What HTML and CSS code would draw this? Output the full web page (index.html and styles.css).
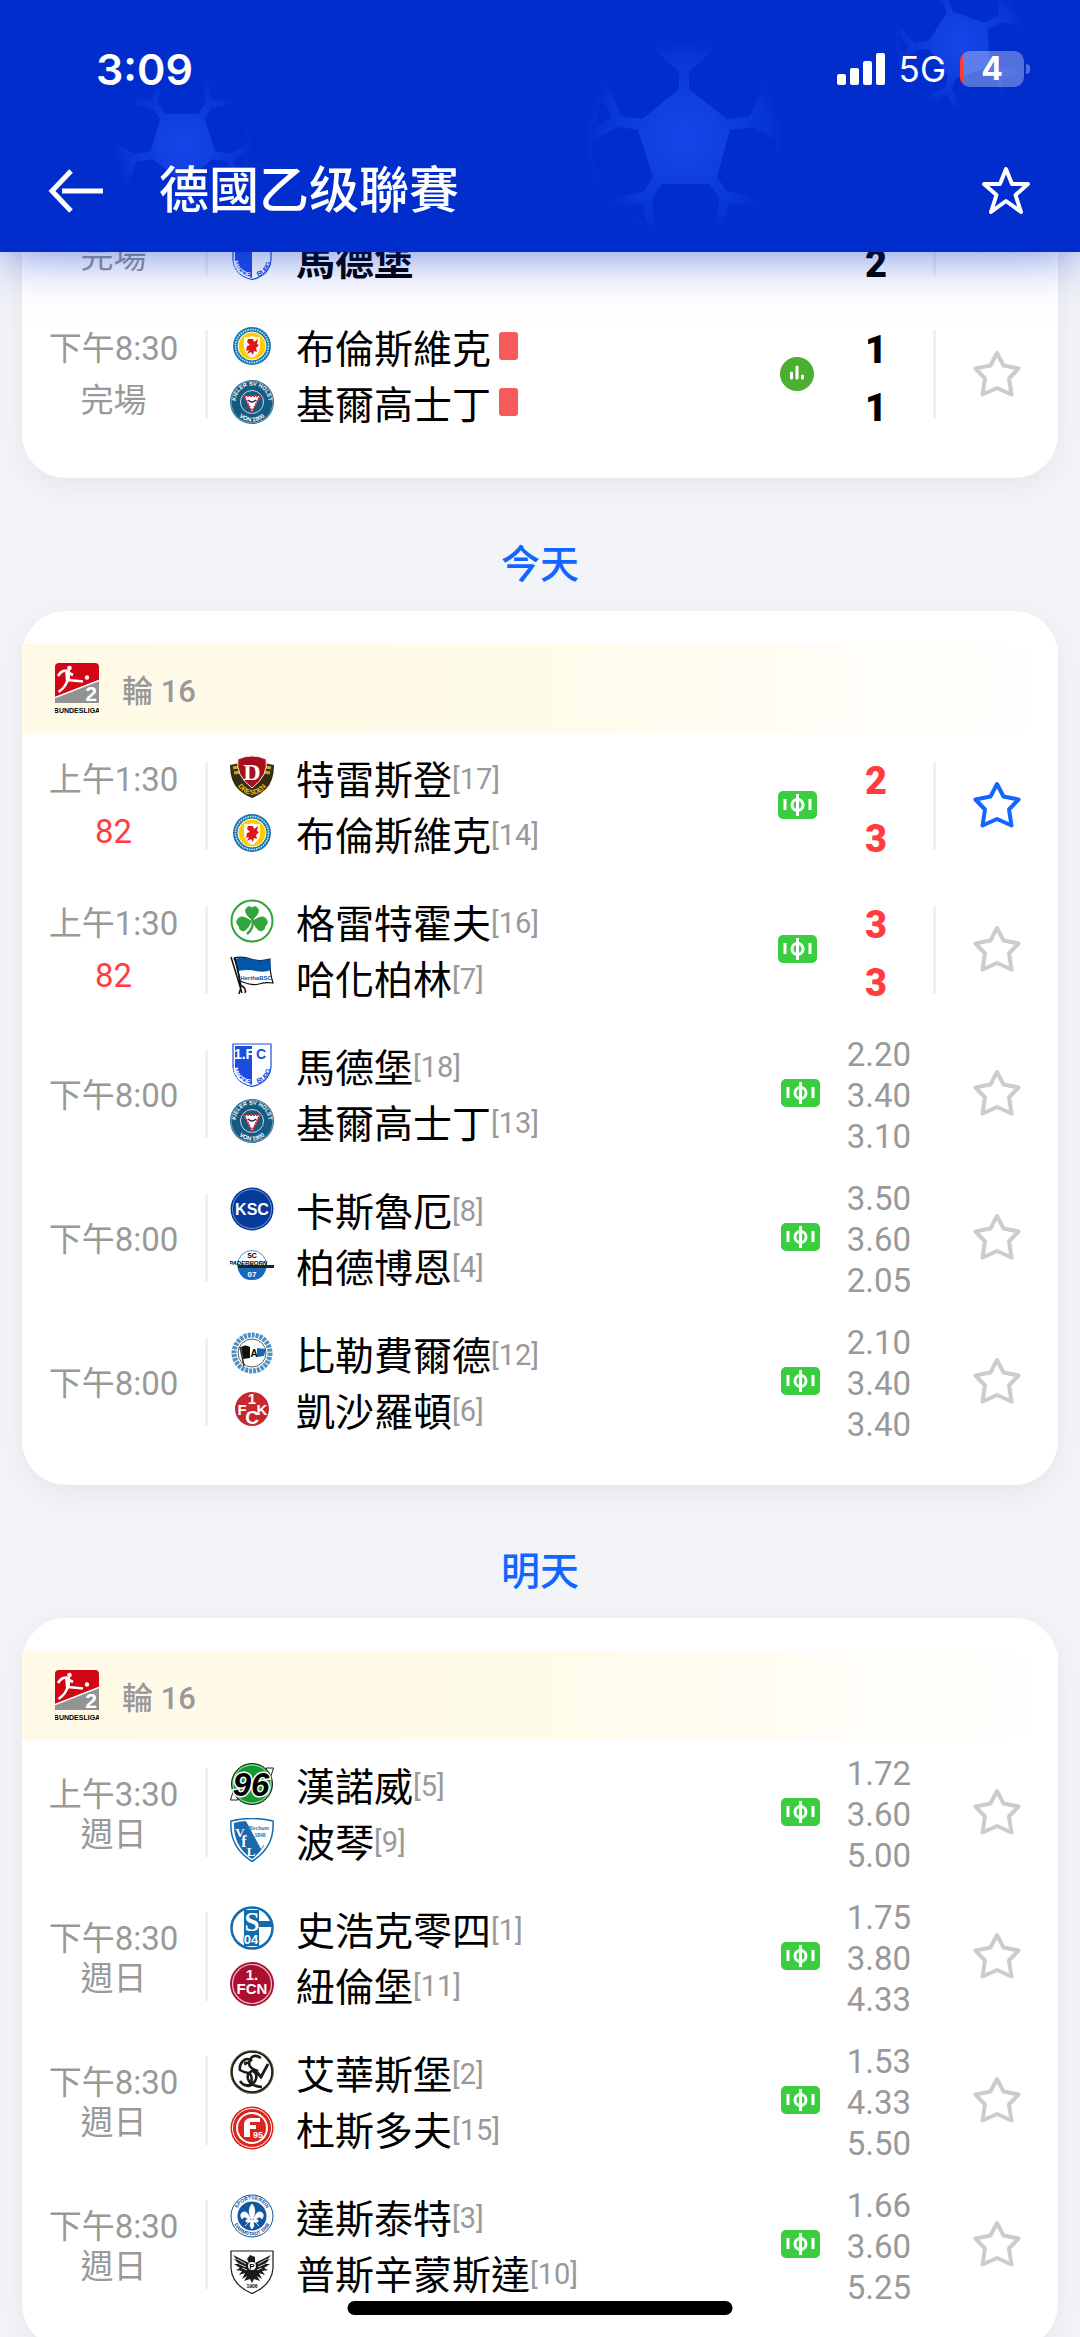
FILE: index.html
```html
<!DOCTYPE html>
<html lang="zh-Hant">

<head>
    <meta charset="UTF-8">
    <meta name="viewport" content="width=device-width, initial-scale=1.0">
    <title>德國乙级聯賽</title>
    <link rel="stylesheet" href="styles.css">
</head>

<body>
    <!-- Gradient needs a rendered svg, so it stays out of the hidden sprite -->
    <svg class="paints" aria-hidden="true">
        <defs>
            <radialGradient id="ballFill">
                <stop offset="0" stop-color="#1747e8" />
                <stop offset="0.45" stop-color="#0f3fdf" />
                <stop offset="0.85" stop-color="#0635d4" />
                <stop offset="1" stop-color="#002dcc" />
            </radialGradient>
        </defs>
    </svg>

    <!-- Shared icons and club badges -->
    <svg class="sprite" aria-hidden="true">
        <defs>
            <path id="ringTop" d="M5.5 22a16.5 16.5 0 0 1 33 0" />
            <path id="ringBottom" d="M2.5 22a19.5 19.5 0 0 0 39 0" />
            <path id="shieldCurve" d="M3 14V24Q4 40 22 41.5Q40 40 41 24V14" />
            <path id="dresdenCurve" d="M3 20Q8 39 22 39.500Q36 39 41 20" />
        </defs>
        <symbol id="ball" viewBox="-100 -102 200 204">
            <circle r="100" fill="url(#ballFill)" />
            <g fill="#002dcc">
                <path d="M-34-92-5-66V-49L-42-19-63-22-76-54Q-62-78-34-92z" />
                <path d="M34-92 5-66V-49L43-19 66-22 78-52Q62-78 34-92z" />
                <path d="M46-8 69-11 92 2Q93 33 76 61L43 53 33 39z" />
                <path d="M-46-8-65-11-91 2Q-92 33-73 61L-40 53-31 39z" />
                <path d="M-22 46H25L35 60 32 90Q0 98-29 90L-32 60z" />
                <path d="M-82-41-72-21-90-9zM-65 70-41 65-39 85zM44 65 66 70 41 85z" />
            </g>
        </symbol>
        <symbol id="star" viewBox="-24 -24 48 48">
            <path d="M0-21 6.500-8.500 21.500-5.500 12 4.500 14.500 20.500 0 14-14.500 20.500-12 4.500-21.500-5.500-6.500-8.500z" fill="none" stroke="currentColor" stroke-width="4" stroke-linejoin="round" />
        </symbol>
        <symbol id="pitch" viewBox="0 0 39 28">
            <rect width="39" height="28" rx="5" fill="#3bcd40" />
            <path d="M7 8v11M32 8v11M19.500 3v22" stroke="#fff" stroke-width="3" />
            <circle cx="19.5" cy="14" r="5.500" fill="none" stroke="#fff" stroke-width="3" />
        </symbol>
        <symbol id="stats" viewBox="0 0 34 34">
            <circle cx="17" cy="17" r="17" fill="#4caf32" />
            <path d="M11.500 16v5M17 10v11M22.500 19v2" stroke="#fff" stroke-width="3" stroke-linecap="round" />
        </symbol>
        <symbol id="league" viewBox="0 0 44 52">
            <rect width="44" height="40" rx="4" fill="#d20515" />
            <path d="M0 34 44 17V40H0z" fill="#929493" />
            <path d="M0 34.500 44 17.500" stroke="#fff" stroke-width="1.500" />
            <circle cx="14.500" cy="5" r="2.300" fill="#fff" />
            <circle cx="32" cy="14.500" r="2.200" fill="#fff" />
            <path d="M13 8Q7 6 3 13M13 8 13 17 28 18.500M13 16Q11 24 3.500 29M12 9 18 12" fill="none" stroke="#fff" stroke-width="2.600" stroke-linejoin="round" />
            <path d="M10 7H15V18L11 19z" fill="#fff" />
            <text x="36" y="38" class="logo-text" font-size="21" fill="#fff">2</text>
            <text x="22" y="50" class="logo-text" font-size="7">BUNDESLIGA</text>
        </symbol>

        <symbol id="braunschweig" viewBox="0 0 44 44">
            <circle cx="22" cy="22" r="19" fill="#1878ae" />
            <circle cx="22" cy="22" r="16.500" fill="none" stroke="#d4e8f2" stroke-width="1.500" stroke-dasharray="1.500 1" />
            <circle cx="22" cy="22" r="14" fill="#fc0" stroke="#fff" />
            <path d="M14 13Q18 14 22 12Q26 14 30 13V22Q30 30 22 34Q14 30 14 22z" fill="#fff" />
            <path d="M18 15h5l1 3 4-3-1 5 2 1-3 3 1 4-3-1-1 4-2-3-4 2 2-4-3 1 1-5 3-1-3-3z" fill="#e1141c" />
        </symbol>
        <symbol id="kiel" viewBox="0 0 44 44">
            <circle cx="22" cy="22" r="22" fill="#155a80" />
            <circle cx="22" cy="22" r="21" fill="none" stroke="#9dc0d2" stroke-width="0.700" />
            <text class="ring-text" font-size="5.500" fill="#fff"><textPath href="#ringTop" startOffset="50%">KIELER SV HOLST</textPath></text>
            <text class="ring-text" font-size="6" fill="#fff"><textPath href="#ringBottom" startOffset="50%">VON 1900</textPath></text>
            <circle cx="22" cy="22" r="11.500" fill="#155a80" stroke="#c9dde7" />
            <path d="M14 16H30L22 32z" fill="#fff" stroke="#d8273a" stroke-width="2" stroke-dasharray="2 1" />
            <path d="M18 20Q22 24 26 20" fill="none" stroke="#234" stroke-width="1.500" />
        </symbol>
        <symbol id="magdeburg" viewBox="0 0 44 44">
            <path d="M3 1H41V24Q39 40 22 43.500Q5 40 3 24z" fill="#fff" stroke="#1c4de0" stroke-width="1.200" />
            <path d="M5 3H22V42Q7 38 5 24z" fill="#1c4de0" />
            <text x="14" y="16" class="logo-text" font-size="14" fill="#fff">1.F</text>
            <text x="31" y="16" class="logo-text" font-size="14" fill="#1c4de0">C</text>
            <text class="ring-text" font-size="7" fill="#1c4de0"><textPath href="#shieldCurve" startOffset="71%">BURG</textPath></text>
            <text class="ring-text" font-size="7" fill="#fff"><textPath href="#shieldCurve" startOffset="31%">MAGDE</textPath></text>
        </symbol>
        <symbol id="dresden" viewBox="0 0 44 44">
            <path d="M0 10 10 8 34 8 44 10Q44 26 36 34Q30 40 22 43Q14 40 8 34Q0 26 0 10z" fill="#342d13" />
            <path d="M3 13 8 12M4 18 10 17M41 13 36 12M40 18 34 17" stroke="#c9a419" stroke-width="3" />
            <path d="M8 4Q22-2 36 4Q39 20 22 33Q5 20 8 4z" fill="#a6101c" stroke="#f5e6e6" />
            <text class="ring-text" font-size="7" fill="#e3bd18"><textPath href="#dresdenCurve" startOffset="50%">DRESDEN</textPath></text>
            <text x="22" y="25" class="logo-serif" font-size="24" fill="#fff">D</text>
        </symbol>
        <symbol id="greuther" viewBox="0 0 44 44">
            <circle cx="22" cy="22" r="20.500" fill="#fff" stroke="#2fa53b" stroke-width="2" />
            <path d="M22 21Q14 14 16 10Q18 6 22 9Q26 6 28 10Q30 14 22 21zM21 22Q18 31 13 32Q9 31 9 27Q5 24 8 20Q11 15 21 22zM23 22Q33 15 36 20Q39 24 35 27Q35 31 31 32Q26 31 23 22z" fill="#2fa53b" stroke="#2fa53b" />
            <path d="M22.500 20Q24 30 17 35" fill="none" stroke="#2fa53b" stroke-width="2.500" />
        </symbol>
        <symbol id="hertha" viewBox="0 0 44 44">
            <path d="M4 3Q12 1 21 4T40 4Q39 14 43 28Q36 27 29 29T10 26Q8 12 4 3z" fill="#fff" stroke="#111" stroke-width="1.200" />
            <path d="M5 4Q12 1 21 4T40 4L41 15Q34 18 26 16T8 16z" fill="#0056a8" />
            <text x="26" y="25" class="logo-text" font-size="6" fill="#0056a8">HerthaBSC</text>
            <path d="M1 2 12 38M5 3 11 31M10 30Q17 33 15 38M11 32 9 39" fill="none" stroke="#111" stroke-width="1.500" />
        </symbol>
        <symbol id="karlsruhe" viewBox="0 0 44 44">
            <circle cx="22" cy="22" r="21.500" fill="#063a9b" />
            <circle cx="22" cy="22" r="19.500" fill="none" stroke="#8da9dc" stroke-width="0.800" />
            <text x="22" y="28" class="logo-text" font-size="16" fill="#fff">KSC</text>
        </symbol>
        <symbol id="paderborn" viewBox="0 0 44 44">
            <circle cx="22" cy="22" r="14.500" fill="#fff" stroke="#4c94d3" />
            <path d="M8 25H36Q34 37 22 37Q10 37 8 25z" fill="#1868bd" />
            <path d="M8 22H44V25H8z" fill="#222" />
            <text x="22" y="15" class="logo-text" font-size="7">SC</text>
            <text x="18" y="22" class="logo-text" font-size="6" font-style="italic">PADERBORN</text>
            <text x="22" y="34" class="logo-text" font-size="8" fill="#fff">07</text>
        </symbol>
        <symbol id="bielefeld" viewBox="0 0 44 44">
            <circle cx="22" cy="22" r="18" fill="#fff" stroke="#4e8fc4" stroke-width="5" stroke-dasharray="3 1" />
            <circle cx="22" cy="22" r="14" fill="#fff" stroke="#333" stroke-width="0.800" />
            <path d="M11 16Q15 13 20 16V27L13 28z" fill="#111" />
            <path d="M27 17 36 18 34 25 27 26z" fill="#1868ae" />
            <path d="M10 16 14 35" stroke="#333" stroke-width="1.500" />
            <text x="24" y="26" class="logo-text" font-size="10">A</text>
        </symbol>
        <symbol id="kaiserslautern" viewBox="0 0 44 44">
            <circle cx="22" cy="22" r="17" fill="#c5282d" />
            <g fill="#fff">
                <text x="22" y="17" class="logo-text" font-size="15">1</text>
                <text x="12" y="28" class="logo-text" font-size="15">F</text>
                <text x="32" y="28" class="logo-text" font-size="15">K</text>
                <text x="22" y="37" class="logo-text" font-size="19">C</text>
            </g>
        </symbol>
        <symbol id="hannover" viewBox="0 0 44 44">
            <path d="M36 6H43.500L40 17zM8 38H0.500L4 27z" fill="#fff" stroke="#222" />
            <circle cx="22" cy="22" r="20.500" fill="#139a2f" stroke="#222" />
            <circle cx="22" cy="22" r="19" fill="none" stroke="#e6f4e8" stroke-width="0.800" />
            <text x="21" y="34" class="logo-text hannover-text" font-size="33" font-style="italic">96</text>
        </symbol>
        <symbol id="bochum" viewBox="0 0 44 44">
            <path d="M1 3Q22-2 43 3Q45 29 22 43.500Q-1 29 1 3z" fill="#fff" stroke="#1b69ac" stroke-width="1.500" />
            <path d="M4 5Q10 3 16 3L34 28Q29 36 22 41Q3 28 4 5z" fill="#1b69ac" />
            <path d="M16 3 31 31Q41 18 40 5Q30 2 16 3z" fill="#fff" />
            <text x="10" y="19" class="logo-serif" font-size="13" fill="#fff">V</text>
            <text x="14" y="29" class="logo-serif" font-size="16" fill="#fff">f</text>
            <text x="21" y="38" class="logo-serif" font-size="13" fill="#fff">L</text>
            <text x="29" y="12" class="logo-text" font-size="5" fill="#1b69ac">Bochum</text>
            <text x="30" y="19" class="logo-text" font-size="5" fill="#1b69ac">1848</text>
        </symbol>
        <symbol id="schalke" viewBox="0 0 44 44">
            <circle cx="22" cy="22" r="20.500" fill="#fff" stroke="#126bab" stroke-width="2.500" />
            <path d="M14 4H29V15H41V21H29V40H14z" fill="#126bab" />
            <text x="22" y="25" class="logo-serif" font-size="27" fill="#fff">S</text>
            <text x="21" y="38" class="logo-text schalke-year" font-size="13" fill="#fff">04</text>
        </symbol>
        <symbol id="nuernberg" viewBox="0 0 44 44">
            <circle cx="22" cy="22" r="22" fill="#ac0e30" />
            <circle cx="22" cy="22" r="19.500" fill="none" stroke="#e8c0ca" stroke-width="1.200" />
            <text x="22" y="18" class="logo-text" font-size="15" fill="#fff">1.</text>
            <text x="22" y="32" class="logo-text" font-size="15" fill="#fff">FCN</text>
        </symbol>
        <symbol id="elversberg" viewBox="0 0 44 44">
            <circle cx="22" cy="22" r="20.500" fill="#fff" stroke="#1c1a17" stroke-width="2.500" />
            <circle cx="22" cy="22" r="21.500" fill="none" stroke="#a9976a" stroke-width="0.700" />
            <path d="M22 11Q17 7 13 11T10 20Q13 22 18 23T21 34Q15 38 10 31M31 8Q23 3 20 10T25 20Q16 22 18 29T32 37M22 20Q29 24 25 31T15 35M16 15Q14 12 18 13" fill="none" stroke="#1c1a17" stroke-width="2.600" />
            <path d="M25 20 31 27 38 14" fill="none" stroke="#1c1a17" stroke-width="2.800" />
        </symbol>
        <symbol id="duesseldorf" viewBox="0 0 44 44">
            <circle cx="22" cy="22" r="21.500" fill="#dc241f" />
            <circle cx="22" cy="22" r="19.500" fill="none" stroke="#fff" />
            <circle cx="22" cy="22" r="15" fill="none" stroke="#fff" stroke-width="2" />
            <path d="M30 12H20Q13 13 14 21V31H20V23H26V19H20V16H30z" fill="#fff" />
            <text x="28" y="32" class="logo-text" font-size="9" fill="#fff">95</text>
        </symbol>
        <symbol id="darmstadt" viewBox="0 0 44 44">
            <circle cx="22" cy="22" r="21" fill="#fff" stroke="#1256a0" />
            <text class="ring-text" font-size="5" fill="#1256a0"><textPath href="#ringTop" startOffset="50%">SPORTVEREIN</textPath></text>
            <text class="ring-text" font-size="5" fill="#1256a0"><textPath href="#ringBottom" startOffset="50%">DARMSTADT 1898</textPath></text>
            <circle cx="22" cy="22" r="14.500" fill="#1256a0" />
            <path d="M22 10Q27 15 23 25H21Q17 15 22 10zM20 25Q18 17 13 18Q9 20 12 25Q15 20 19 27zM24 25Q26 17 31 18Q35 20 32 25Q29 20 25 27zM16 26H28V28H16zM21 28H23L24 32 22 35 20 32zM19 28 15 32M25 28 29 32" fill="#fff" stroke="#fff" stroke-width="0.800" />
        </symbol>
        <symbol id="muenster" viewBox="0 0 44 44">
            <path d="M1 1H43V18Q42 35 22 43.500Q2 35 1 18z" fill="#fff" stroke="#1a1a1a" stroke-width="1.200" />
            <path d="M20 5 17 9 19 13 3 5 7 10 4 9 9 14 4 14 10 18 6 20 12 21 9 25 15 23 12 29 17 26 14 31 20 29 22 33 24 29 30 31 27 26 32 29 29 23 35 25 32 21 38 20 34 18 40 14 35 14 40 9 37 10 41 5 25 13 25 7z" fill="#1a1a1a" />
            <path d="M16 14 7 9M16 17 9 14M17 20 12 18M28 14 37 9M28 17 35 14M27 20 32 18" stroke="#fff" stroke-width="0.800" />
            <circle cx="22" cy="16" r="4" fill="#fff" />
            <text x="22" y="19" class="logo-text" font-size="8">P</text>
            <text x="22" y="38" class="logo-text" font-size="5">1906</text>
        </symbol>
    </svg>

    <div class="app">
        <header class="header">
            <svg class="ball ball-left"><use href="#ball" /></svg>
            <svg class="ball ball-middle"><use href="#ball" /></svg>
            <svg class="ball ball-right"><use href="#ball" /></svg>

            <div class="status-bar">
                <span class="clock">3:09</span>
                <div class="status-icons">
                    <svg class="signal" viewBox="0 0 48 32" fill="#fff">
                        <rect y="21" width="9" height="11" rx="2" />
                        <rect x="13" y="15" width="9" height="17" rx="2" />
                        <rect x="26" y="8" width="9" height="24" rx="2" />
                        <rect x="39" width="9" height="32" rx="2" />
                    </svg>
                    <span class="network">5G</span>
                    <span class="battery">4</span>
                </div>
            </div>

            <div class="nav-bar">
                <button class="icon-button" aria-label="返回">
                    <svg class="arrow" viewBox="0 0 55 44" fill="none" stroke="#fff" stroke-width="5">
                        <path d="M23 2 4 22 23 42M14 22H55" />
                    </svg>
                </button>
                <h1 class="title">德國乙级聯賽</h1>
                <button class="icon-button" aria-label="收藏聯賽">
                    <svg class="nav-star" viewBox="-24 -24 48 48" fill="none" stroke="#fff" stroke-width="4" stroke-linejoin="round">
                        <path d="M0-22 6-7H22L9.500 4 15 21 0 10-15 21-9.500 4-22-7H-6z" />
                    </svg>
                </button>
            </div>
        </header>

        <main class="schedule">
            <section class="card">
                <div class="match">
                    <div class="time spaced"><span>下午8:00</span><span>完場</span></div>
                    <div class="teams">
                        <div class="team"></div>
                        <div class="team winner"><svg><use href="#magdeburg" /></svg><span>馬德堡</span></div>
                    </div>
                    <svg class="stats"><use href="#stats" /></svg>
                    <div class="score"><span>1</span><span>2</span></div>
                    <button class="favorite divided" aria-label="收藏"><svg><use href="#star" /></svg></button>
                </div>
                <div class="match">
                    <div class="time spaced"><span>下午8:30</span><span>完場</span></div>
                    <div class="teams">
                        <div class="team"><svg><use href="#braunschweig" /></svg><span>布倫斯維克</span><i class="red-card"></i></div>
                        <div class="team"><svg><use href="#kiel" /></svg><span>基爾高士丁</span><i class="red-card"></i></div>
                    </div>
                    <svg class="stats"><use href="#stats" /></svg>
                    <div class="score"><span>1</span><span>1</span></div>
                    <button class="favorite divided" aria-label="收藏"><svg><use href="#star" /></svg></button>
                </div>
            </section>

            <h2 class="day">今天</h2>
            <section class="card">
                <div class="round"><svg><use href="#league" /></svg><span>輪 16</span></div>
                <div class="match">
                    <div class="time spaced"><span>上午1:30</span><span class="live">82</span></div>
                    <div class="teams">
                        <div class="team"><svg><use href="#dresden" /></svg><span>特雷斯登</span><span class="rank">[17]</span></div>
                        <div class="team"><svg><use href="#braunschweig" /></svg><span>布倫斯維克</span><span class="rank">[14]</span></div>
                    </div>
                    <svg class="pitch"><use href="#pitch" /></svg>
                    <div class="score live"><span>2</span><span>3</span></div>
                    <button class="favorite divided active" aria-label="取消收藏"><svg><use href="#star" /></svg></button>
                </div>
                <div class="match">
                    <div class="time spaced"><span>上午1:30</span><span class="live">82</span></div>
                    <div class="teams">
                        <div class="team"><svg><use href="#greuther" /></svg><span>格雷特霍夫</span><span class="rank">[16]</span></div>
                        <div class="team"><svg><use href="#hertha" /></svg><span>哈化柏林</span><span class="rank">[7]</span></div>
                    </div>
                    <svg class="pitch"><use href="#pitch" /></svg>
                    <div class="score live"><span>3</span><span>3</span></div>
                    <button class="favorite divided" aria-label="收藏"><svg><use href="#star" /></svg></button>
                </div>
                <div class="match">
                    <div class="time"><span>下午8:00</span></div>
                    <div class="teams">
                        <div class="team"><svg><use href="#magdeburg" /></svg><span>馬德堡</span><span class="rank">[18]</span></div>
                        <div class="team"><svg><use href="#kiel" /></svg><span>基爾高士丁</span><span class="rank">[13]</span></div>
                    </div>
                    <svg class="pitch"><use href="#pitch" /></svg>
                    <div class="odds"><span>2.20</span><span>3.40</span><span>3.10</span></div>
                    <button class="favorite" aria-label="收藏"><svg><use href="#star" /></svg></button>
                </div>
                <div class="match">
                    <div class="time"><span>下午8:00</span></div>
                    <div class="teams">
                        <div class="team"><svg><use href="#karlsruhe" /></svg><span>卡斯魯厄</span><span class="rank">[8]</span></div>
                        <div class="team"><svg><use href="#paderborn" /></svg><span>柏德博恩</span><span class="rank">[4]</span></div>
                    </div>
                    <svg class="pitch"><use href="#pitch" /></svg>
                    <div class="odds"><span>3.50</span><span>3.60</span><span>2.05</span></div>
                    <button class="favorite" aria-label="收藏"><svg><use href="#star" /></svg></button>
                </div>
                <div class="match">
                    <div class="time"><span>下午8:00</span></div>
                    <div class="teams">
                        <div class="team"><svg><use href="#bielefeld" /></svg><span>比勒費爾德</span><span class="rank">[12]</span></div>
                        <div class="team"><svg><use href="#kaiserslautern" /></svg><span>凱沙羅頓</span><span class="rank">[6]</span></div>
                    </div>
                    <svg class="pitch"><use href="#pitch" /></svg>
                    <div class="odds"><span>2.10</span><span>3.40</span><span>3.40</span></div>
                    <button class="favorite" aria-label="收藏"><svg><use href="#star" /></svg></button>
                </div>
            </section>

            <h2 class="day">明天</h2>
            <section class="card">
                <div class="round"><svg><use href="#league" /></svg><span>輪 16</span></div>
                <div class="match">
                    <div class="time"><span>上午3:30</span><span>週日</span></div>
                    <div class="teams">
                        <div class="team"><svg><use href="#hannover" /></svg><span>漢諾威</span><span class="rank">[5]</span></div>
                        <div class="team"><svg><use href="#bochum" /></svg><span>波琴</span><span class="rank">[9]</span></div>
                    </div>
                    <svg class="pitch"><use href="#pitch" /></svg>
                    <div class="odds"><span>1.72</span><span>3.60</span><span>5.00</span></div>
                    <button class="favorite" aria-label="收藏"><svg><use href="#star" /></svg></button>
                </div>
                <div class="match">
                    <div class="time"><span>下午8:30</span><span>週日</span></div>
                    <div class="teams">
                        <div class="team"><svg><use href="#schalke" /></svg><span>史浩克零四</span><span class="rank">[1]</span></div>
                        <div class="team"><svg><use href="#nuernberg" /></svg><span>紐倫堡</span><span class="rank">[11]</span></div>
                    </div>
                    <svg class="pitch"><use href="#pitch" /></svg>
                    <div class="odds"><span>1.75</span><span>3.80</span><span>4.33</span></div>
                    <button class="favorite" aria-label="收藏"><svg><use href="#star" /></svg></button>
                </div>
                <div class="match">
                    <div class="time"><span>下午8:30</span><span>週日</span></div>
                    <div class="teams">
                        <div class="team"><svg><use href="#elversberg" /></svg><span>艾華斯堡</span><span class="rank">[2]</span></div>
                        <div class="team"><svg><use href="#duesseldorf" /></svg><span>杜斯多夫</span><span class="rank">[15]</span></div>
                    </div>
                    <svg class="pitch"><use href="#pitch" /></svg>
                    <div class="odds"><span>1.53</span><span>4.33</span><span>5.50</span></div>
                    <button class="favorite" aria-label="收藏"><svg><use href="#star" /></svg></button>
                </div>
                <div class="match">
                    <div class="time"><span>下午8:30</span><span>週日</span></div>
                    <div class="teams">
                        <div class="team"><svg><use href="#darmstadt" /></svg><span>達斯泰特</span><span class="rank">[3]</span></div>
                        <div class="team"><svg><use href="#muenster" /></svg><span>普斯辛蒙斯達</span><span class="rank">[10]</span></div>
                    </div>
                    <svg class="pitch"><use href="#pitch" /></svg>
                    <div class="odds"><span>1.66</span><span>3.60</span><span>5.25</span></div>
                    <button class="favorite" aria-label="收藏"><svg><use href="#star" /></svg></button>
                </div>
            </section>
        </main>

        <div class="home-indicator"></div>
    </div>
</body>

</html>
```

FILE: styles.css
```css
* {
    box-sizing: border-box;
}

body {
    margin: 0;
    font-family: Roboto, "Noto Sans CJK TC", sans-serif;
    background-color: #f2f4f8;
    color: #000;
}

h1,
h2 {
    margin: 0;
}

button {
    padding: 0;
    border: none;
    background: none;
    cursor: pointer;
}

svg {
    display: block;
    flex-shrink: 0;
}

.paints {
    position: absolute;
    width: 0;
    height: 0;
}

.sprite {
    display: none;
}

.app {
    position: relative;
    height: 100vh;
    overflow: hidden;
}

/* Header lies over the scrolled list */
.header {
    position: absolute;
    top: 0;
    left: 0;
    right: 0;
    z-index: 1;
    padding-bottom: 8px;
    background-color: #002dcc;
    color: #fff;
    box-shadow: 0 0 50px rgba(0, 45, 204, 0.6);
}

.ball {
    position: absolute;
}

.ball-left {
    left: 113px;
    top: 74px;
    width: 140px;
    height: 144px;
    transform: rotate(180deg);
}

.ball-middle {
    left: 584px;
    top: 36px;
    width: 200px;
    height: 204px;
}

.ball-right {
    left: 892px;
    top: -26px;
    width: 136px;
    height: 140px;
    transform: rotate(-18deg);
}

.status-bar {
    position: relative;
    display: flex;
    justify-content: space-between;
    align-items: center;
    height: 138px;
    padding: 0 56px 0 96px;
    font-family: Inter, sans-serif;
}

.clock {
    font-size: 43px;
    font-weight: 600;
}

.status-icons {
    display: flex;
    align-items: center;
}

.signal {
    width: 48px;
    height: 32px;
    margin-right: 14px;
}

.network {
    margin-right: 14px;
    font-size: 35px;
}

.battery {
    position: relative;
    width: 64px;
    height: 36px;
    border-radius: 10px;
    background: linear-gradient(90deg, #ff3b30 3px, rgba(255, 255, 255, 0.32) 3px);
    font-size: 32px;
    font-weight: 700;
    line-height: 36px;
    text-align: center;
}

.battery::after {
    content: "";
    position: absolute;
    top: 13px;
    right: -6px;
    width: 4px;
    height: 10px;
    border-radius: 0 4px 4px 0;
    background-color: rgba(255, 255, 255, 0.32);
}

.nav-bar {
    position: relative;
    display: flex;
    align-items: center;
    height: 106px;
    padding: 0 50px 0 48px;
}

.arrow {
    width: 55px;
    height: 44px;
}

.nav-star {
    width: 48px;
    height: 48px;
}

.title {
    flex: 1;
    margin-left: 56px;
    font-size: 50px;
    font-weight: 500;
    line-height: 60px;
}

.schedule {
    padding: 158px 22px 0;
}

.card {
    padding: 33px 0 32px;
    border-radius: 44px;
    background-color: #fff;
    box-shadow: 0 8px 30px rgba(0, 0, 0, 0.06);
}

.card:first-child {
    padding-top: 0;
}

.day {
    padding: 63px 0 22px;
    color: #1166ff;
    font-size: 39px;
    font-weight: 500;
    line-height: 48px;
    text-align: center;
}

.round {
    display: flex;
    align-items: center;
    gap: 23px;
    height: 89px;
    padding-left: 33px;
    background: linear-gradient(90deg, #fffae6, #fffbea 50%, #fff);
    color: #999;
    font-size: 31px;
    font-weight: 500;
}

.round svg {
    width: 44px;
    height: 52px;
}

.match {
    display: flex;
    align-items: center;
    height: 144px;
}

.time {
    display: flex;
    flex-direction: column;
    justify-content: center;
    width: 186px;
    height: 89px;
    padding-top: 6px;
    border-right: 3px solid #f0f0f0;
    color: #999;
    font-size: 33px;
    line-height: 40px;
    text-align: center;
}

.time.spaced {
    padding-top: 2px;
    line-height: 52px;
}

.teams {
    flex: 1;
    padding-left: 22px;
}

.team {
    display: flex;
    align-items: center;
    height: 56px;
    font-size: 39px;
    white-space: nowrap;
}

.team svg {
    width: 44px;
    height: 44px;
    margin-right: 22px;
}

.winner {
    font-weight: 700;
}

.rank {
    padding-top: 4px;
    color: #999;
    font-size: 29px;
}

.red-card {
    width: 19px;
    height: 28px;
    margin-left: 8px;
    border-radius: 3px;
    background-color: #f65a5c;
}

.pitch {
    width: 39px;
    height: 28px;
}

.stats {
    width: 34px;
    height: 34px;
    margin-right: 3px;
}

.score,
.odds {
    display: flex;
    flex-direction: column;
    width: 116px;
    padding-left: 2px;
    text-align: center;
}

.score {
    padding-top: 10px;
    font-size: 38px;
    font-weight: 900;
    line-height: 58px;
}

.odds {
    padding-top: 4px;
    color: #999;
    font-size: 33px;
    line-height: 41px;
}

.live {
    color: #ff3d40;
}

.favorite {
    display: flex;
    align-items: center;
    justify-content: center;
    width: 122px;
    height: 89px;
    color: #ccc;
}

.favorite svg {
    width: 48px;
    height: 48px;
}

.divided {
    width: 125px;
    border-left: 3px solid #f0f0f0;
}

.active {
    color: #1166ff;
}

.home-indicator {
    position: absolute;
    bottom: 22px;
    left: 50%;
    z-index: 1;
    width: 385px;
    height: 14px;
    border-radius: 7px;
    background-color: #000;
    transform: translateX(-50%);
}

/* Lettering inside the badges */
.logo-text,
.ring-text {
    font-family: "Liberation Sans", sans-serif;
    font-weight: 700;
    text-anchor: middle;
}

.logo-serif {
    font-family: "Liberation Serif", serif;
    font-weight: 700;
    text-anchor: middle;
}

.hannover-text {
    stroke: #fff;
    stroke-width: 3px;
    paint-order: stroke;
}

.schalke-year {
    stroke: #126bab;
    stroke-width: 2px;
    paint-order: stroke;
}
```
